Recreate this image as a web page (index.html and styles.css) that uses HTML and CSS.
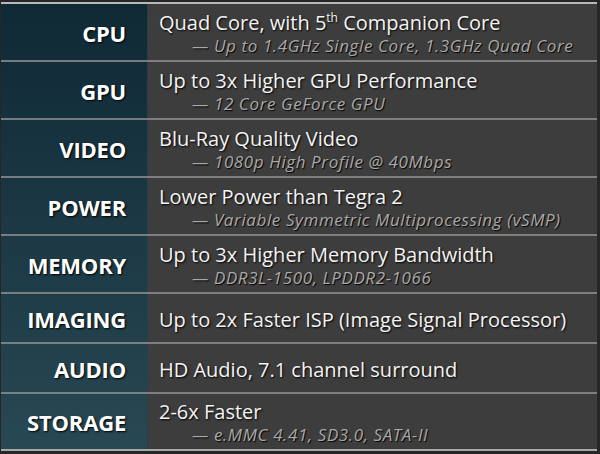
FILE: index.html
```html
<!DOCTYPE html>
<html>
<head>
<meta charset="utf-8">
<link rel="stylesheet" href="styles.css">
</head>
<body>
<div class="slide">
  <div class="table">
    <div class="row">
      <div class="label">CPU</div>
      <div class="desc">
        <div class="main">Quad Core, with 5<sup>th</sup> Companion Core</div>
        <div class="sub">— Up to 1.4GHz Single Core, 1.3GHz Quad Core</div>
      </div>
    </div>
    <div class="row">
      <div class="label">GPU</div>
      <div class="desc">
        <div class="main">Up to 3x Higher GPU Performance</div>
        <div class="sub">— 12 Core GeForce GPU</div>
      </div>
    </div>
    <div class="row">
      <div class="label">VIDEO</div>
      <div class="desc">
        <div class="main">Blu-Ray Quality Video</div>
        <div class="sub">— 1080p High Profile @ 40Mbps</div>
      </div>
    </div>
    <div class="row">
      <div class="label">POWER</div>
      <div class="desc">
        <div class="main">Lower Power than Tegra 2</div>
        <div class="sub">— Variable Symmetric Multiprocessing (vSMP)</div>
      </div>
    </div>
    <div class="row">
      <div class="label">MEMORY</div>
      <div class="desc">
        <div class="main">Up to 3x Higher Memory Bandwidth</div>
        <div class="sub">— DDR3L-1500, LPDDR2-1066</div>
      </div>
    </div>
    <div class="row single">
      <div class="label">IMAGING</div>
      <div class="desc">
        <div class="main">Up to 2x Faster ISP (Image Signal Processor)</div>
      </div>
    </div>
    <div class="row single">
      <div class="label">AUDIO</div>
      <div class="desc">
        <div class="main">HD Audio, 7.1 channel surround</div>
      </div>
    </div>
    <div class="row last">
      <div class="label">STORAGE</div>
      <div class="desc">
        <div class="main">2-6x Faster</div>
        <div class="sub">— e.MMC 4.41, SD3.0, SATA-II</div>
      </div>
    </div>
  </div>
</div>
</body>
</html>
```
FILE: styles.css
```css
html, body {
  margin: 0;
  padding: 0;
  background: #262626;
}
.slide {
  width: 600px;
  height: 454px;
  box-sizing: border-box;
  padding: 2px 3px 0 1px;
  background: #262626;
  font-family: "Open Sans", "DejaVu Sans", sans-serif;
}
.table {
  border-top: 2px solid #b8b8b8;
  border-bottom: 2px solid #a8a8a8;
  background:
    linear-gradient(#0f2935, #284854) left top / 147px 100% no-repeat,
    #3d3d3d;
}
.row {
  display: grid;
  grid-template-columns: 147px 1fr;
  height: 58px;
  box-sizing: border-box;
  border-bottom: 2px solid rgba(150, 150, 150, 0.75);
}
.row.single {
  height: 50px;
}
.row.last {
  height: 55px;
  border-bottom: none;
}
.label {
  display: flex;
  align-items: center;
  justify-content: flex-end;
  padding-right: 21px;
  padding-top: 1px;
  color: #ffffff;
  font-weight: 700;
  font-size: 22px;
  letter-spacing: -0.2px;
  text-shadow: 1px 1px 2px #000;
  border-right: 1px solid #2a3e46;
}
.desc {
  display: flex;
  flex-direction: column;
  justify-content: center;
  padding-left: 11px;
  padding-top: 3px;
}
.main {
  color: #f4f4f4;
  font-size: 20px;
  line-height: 24px;
  text-shadow: 1px 1px 2px #000;
}
.main sup {
  font-size: 12px;
  line-height: 0;
  vertical-align: 8px;
}
.sub {
  color: #a9a9a9;
  font-style: italic;
  font-size: 17px;
  letter-spacing: 0.6px;
  line-height: 22px;
  padding-left: 33px;
  text-shadow: 1px 1px 1px #000;
}
```
